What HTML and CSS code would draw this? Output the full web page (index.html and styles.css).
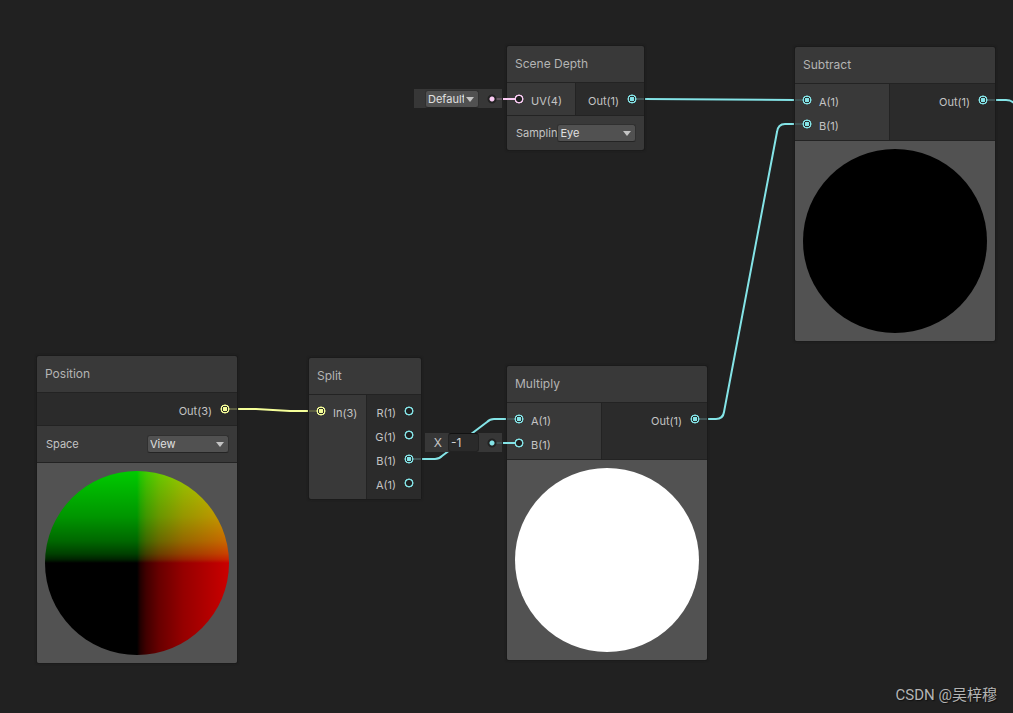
FILE: index.html
```html
<!DOCTYPE html>
<html lang="en">
<head>
<meta charset="utf-8">
<title>Shader Graph</title>
<link rel="stylesheet" href="styles.css">
</head>
<body>
<main class="canvas">
  <svg class="edges" aria-hidden="true">
    <path class="edge yellow" d="M237 409 L256 409 L290 411 L309 411"/>
    <path class="edge cyan" d="M644 99 L795 100"/>
    <path class="edge cyan" d="M421 459 H435 Q439 459 442 456 L487 422 Q490 419 494 419 H507"/>
    <path class="edge cyan" d="M707 419 H716 Q723 419 724 412 L777 132 Q778 124 785 124 H795"/>
    <path class="edge cyan" d="M995 100 H1006 Q1011 100 1014 103"/>
  </svg>

  <section class="node scene-depth">
    <h2 class="title">Scene Depth</h2>
    <div class="ports">
      <div class="inputs"><div class="port pink fed"><i class="dot"></i><span>UV(4)</span></div></div>
      <div class="outputs"><div class="port cyan on"><span>Out(1)</span><i class="dot"></i></div></div>
    </div>
    <div class="controls compact">
      <label class="name" for="sampling">Samplin</label>
      <span class="dropdown"><select id="sampling"><option>Eye</option></select><svg class="arrow" viewBox="0 0 8 5"><path d="M0 0H8L4 5Z"/></svg></span>
    </div>
  </section>

  <section class="node subtract">
    <h2 class="title">Subtract</h2>
    <div class="ports">
      <div class="inputs">
        <div class="port cyan on"><i class="dot"></i><span>A(1)</span></div>
        <div class="port cyan on"><i class="dot"></i><span>B(1)</span></div>
      </div>
      <div class="outputs"><div class="port cyan on"><span>Out(1)</span><i class="dot"></i></div></div>
    </div>
    <div class="preview"><div class="sphere black"></div></div>
  </section>

  <section class="node position">
    <h2 class="title">Position</h2>
    <div class="ports">
      <div class="outputs"><div class="port yellow on"><span>Out(3)</span><i class="dot"></i></div></div>
    </div>
    <div class="controls">
      <label class="name" for="space">Space</label>
      <span class="dropdown"><select id="space"><option>View</option></select><svg class="arrow" viewBox="0 0 8 5"><path d="M0 0H8L4 5Z"/></svg></span>
    </div>
    <div class="preview"><div class="sphere view-space"></div></div>
  </section>

  <section class="node split">
    <h2 class="title">Split</h2>
    <div class="ports">
      <div class="inputs"><div class="port yellow on"><i class="dot"></i><span>In(3)</span></div></div>
      <div class="outputs">
        <div class="port cyan"><span>R(1)</span><i class="dot"></i></div>
        <div class="port cyan"><span>G(1)</span><i class="dot"></i></div>
        <div class="port cyan on"><span>B(1)</span><i class="dot"></i></div>
        <div class="port cyan"><span>A(1)</span><i class="dot"></i></div>
      </div>
    </div>
  </section>

  <section class="node multiply">
    <h2 class="title">Multiply</h2>
    <div class="ports">
      <div class="inputs">
        <div class="port cyan on"><i class="dot"></i><span>A(1)</span></div>
        <div class="port cyan fed"><i class="dot"></i><span>B(1)</span></div>
      </div>
      <div class="outputs"><div class="port cyan on"><span>Out(1)</span><i class="dot"></i></div></div>
    </div>
    <div class="preview"><div class="sphere white"></div></div>
  </section>

  <div class="value uv-value pink">
    <span class="dropdown"><select aria-label="UV source"><option>Default</option></select><svg class="arrow" viewBox="0 0 8 5"><path d="M0 0H8L4 5Z"/></svg></span>
    <i class="plug"></i>
  </div>
  <div class="value b-value cyan">
    <label for="x">X</label>
    <input id="x" type="text" value="-1">
    <i class="plug"></i>
  </div>

  <p class="credit">CSDN @吴梓穆</p>
</main>
</body>
</html>
```
FILE: styles.css
```css
* { box-sizing: border-box; }

body {
  margin: 0;
  background: #212121;
  color: #c4c4c4;
  font: 11px/16px Inter, "Liberation Sans", sans-serif;
}

.canvas {
  position: relative;
  min-height: 100vh;
  overflow: hidden;
}

.cyan { --c: #84e4e7; --dim: #415354; }
.yellow { --c: #f6ff9a; --dim: #5b5d42; }
.pink { --c: #fbcbf4; --dim: #655762; }

.edges {
  position: absolute;
  inset: 0;
  width: 100%;
  height: 100%;
}
.edge { fill: none; stroke: var(--c); stroke-width: 2; }

/* Nodes */
.node {
  position: absolute;
  width: 200px;
  background: #393939;
  border-radius: 2px;
  box-shadow: 0 0 0 1px #1b1b1b, 0 0 3px #191919;
}
.scene-depth { left: 507px; top: 46px; width: 137px; }
.subtract { left: 795px; top: 47px; }
.position { left: 37px; top: 356px; }
.split { left: 309px; top: 358px; width: 112px; }
.multiply { left: 507px; top: 366px; }

.title {
  margin: 0;
  padding: 10px 8px;
  font-size: 12px;
  font-weight: 400;
  color: #b4b4b4;
}

.ports { display: flex; border-top: 1px solid #232323; }
.inputs { flex: none; width: 95px; padding: 4px 0; border-right: 1px solid #232323; }
.scene-depth .inputs { width: 69px; }
.split .inputs { width: 58px; }
.outputs { flex: 1; padding: 4px 0; background: #2b2b2b; }

.port {
  position: relative;
  display: flex;
  align-items: center;
  gap: 7px;
  height: 24px;
  padding: 0 7px;
}
.outputs .port { justify-content: flex-end; gap: 8px; }
.port span { padding-top: 4px; }
.dot {
  flex: none;
  width: 10px;
  height: 10px;
  border-radius: 50%;
  background: radial-gradient(circle closest-side, #212121 54%, var(--c) 68%, var(--c) 84%, transparent 96%);
  z-index: 1;
}
.on .dot {
  background: radial-gradient(circle closest-side, var(--c) 42%, #212121 52%, #212121 58%, var(--c) 68%, var(--c) 84%, transparent 96%);
}
.on::before, .fed::before {
  content: "";
  position: absolute;
  top: 11px;
  left: 0;
  width: 8px;
  height: 2px;
  background: var(--dim);
}
.outputs .on::before { left: auto; right: 0; }
.fed::before { left: -4px; width: 12px; background: var(--c); }

/* Controls */
.controls {
  display: flex;
  align-items: center;
  justify-content: space-between;
  height: 37px;
  padding: 0 8px 0 9px;
  border-top: 1px solid #232323;
}
.controls.compact { height: 35px; }
.controls .dropdown { width: 82px; flex: none; }
.compact .dropdown { width: 79px; }

.dropdown { position: relative; display: flex; }
select {
  appearance: none;
  width: 100%;
  height: 18px;
  margin: 0;
  padding: 0 14px 0 2px;
  border: 1px solid #303030;
  border-bottom-color: #242424;
  border-radius: 3px;
  background: #515151;
  color: #e0e0e0;
  font: 11px/16px Inter, "Liberation Sans", sans-serif;
}
.arrow {
  position: absolute;
  top: 7px;
  right: 5px;
  width: 8px;
  height: 5px;
  fill: #c4c4c4;
  pointer-events: none;
}

/* Inline input values */
.value {
  position: absolute;
  display: flex;
  align-items: center;
  justify-content: flex-end;
  height: 19px;
  background: #373737;
}
.uv-value { left: 414px; top: 89px; width: 88px; }
.b-value { left: 425px; top: 433px; width: 77px; }
.value .dropdown { width: 54px; margin-right: 7px; }
.value label { margin-right: 6px; font-size: 12px; }
.value input {
  width: 31px;
  height: 19px;
  margin-right: 7px;
  padding: 0 2px;
  border: 1px solid #222;
  border-top-color: #111;
  border-radius: 3px;
  background: #2a2a2a;
  color: #d2d2d2;
  font: inherit;
  font-size: 12px;
}
.plug {
  width: 16px;
  height: 10px;
  background:
    radial-gradient(circle at 6px 5px, var(--c) 2px, #212121 3px, #212121 4px, transparent 5px),
    linear-gradient(var(--dim), var(--dim)) 10px 4px / 6px 2px no-repeat;
}

/* Previews */
.preview {
  padding: 8px;
  border-top: 1px solid #232323;
  border-radius: 0 0 2px 2px;
  background: #525252;
}
.sphere { aspect-ratio: 1; border-radius: 50%; }
.black { background: #000; }
.white { background: #fff; }
.view-space {
  background:
    linear-gradient(to right, #000 50%, #240000 52%, #400000 55%, #680000 62%, #950000 75%, #cb0000 100%),
    linear-gradient(to top, #000 50%, #002400 52%, #004000 55%, #006800 62%, #009500 75%, #00cb00 100%);
  background-blend-mode: screen;
}

.credit {
  position: absolute;
  right: 16px;
  bottom: 8px;
  margin: 0;
  color: #b4b4b4;
  font: 15px/20px Roboto, "Noto Sans CJK SC", sans-serif;
  text-shadow: 1px 1px 1px #111;
}
```
